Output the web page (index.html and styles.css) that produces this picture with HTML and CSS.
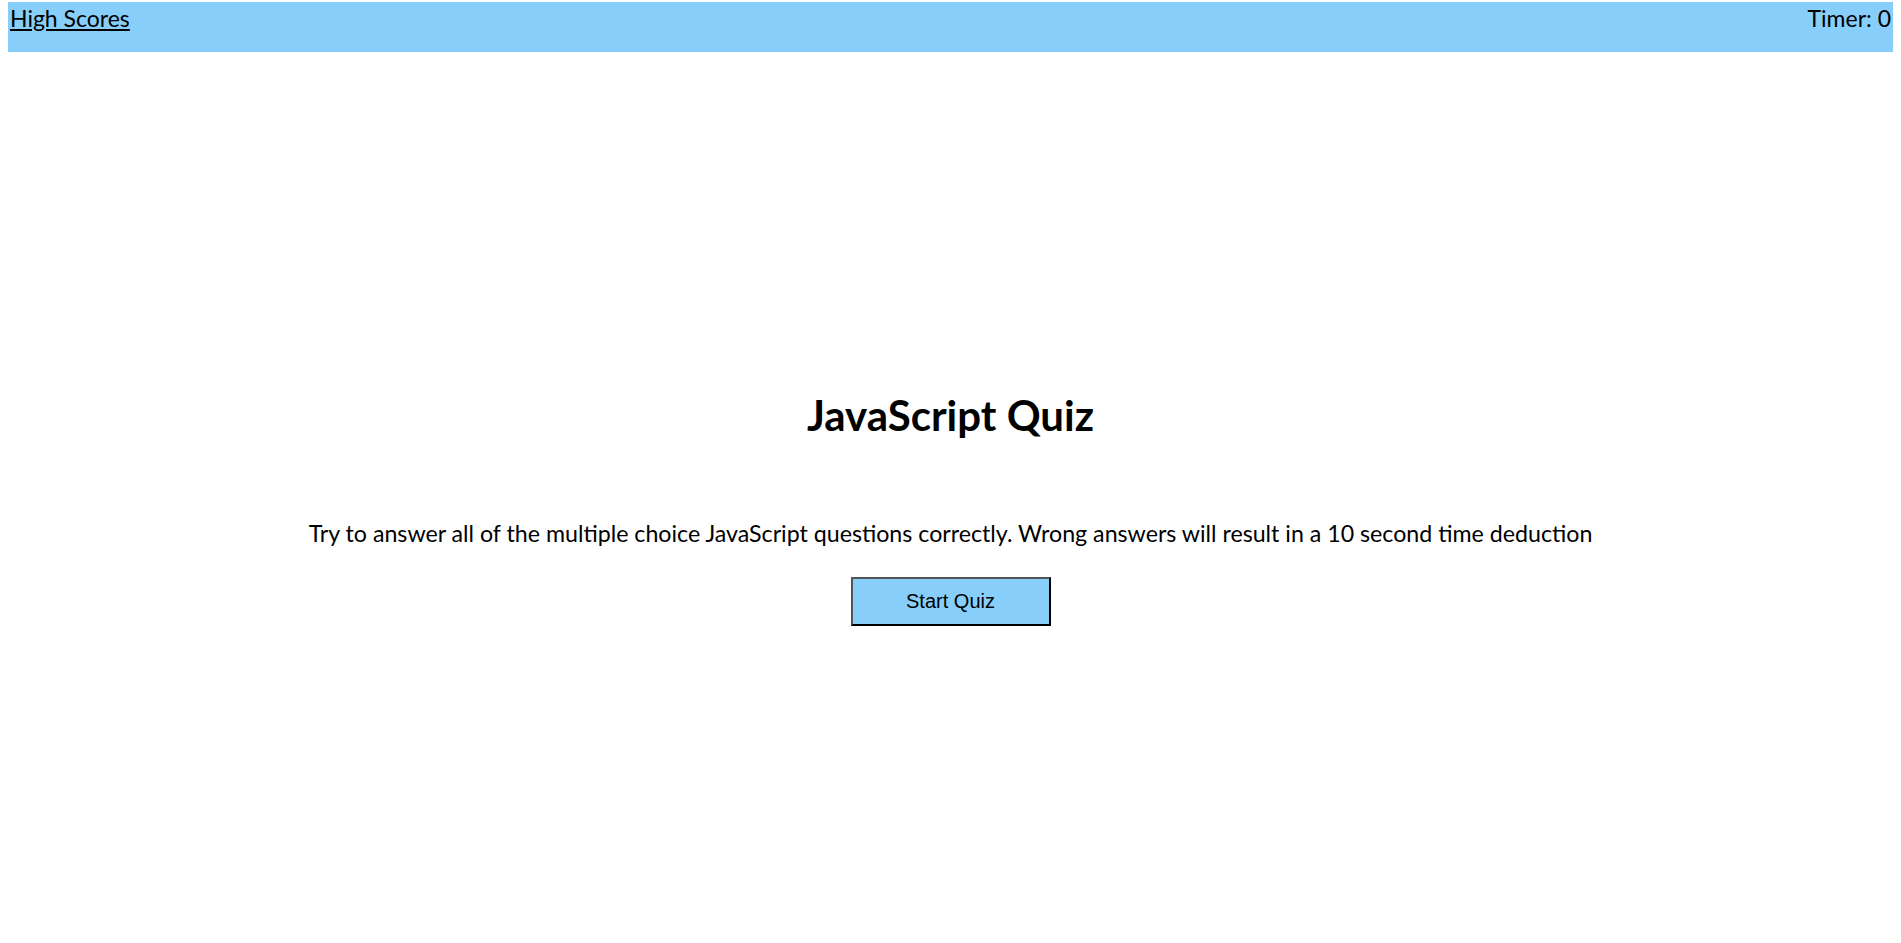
FILE: index.html
```html
<!DOCTYPE html>
<html lang="en">
<head>
<meta charset="utf-8">
<title>JavaScript Quiz</title>
<link rel="stylesheet" href="styles.css">
</head>
<body>
<header class="topbar">
  <a class="scores-link" href="#">High Scores</a>
  <div class="timer">Timer: 0</div>
</header>
<main class="intro">
  <h1 class="title">JavaScript Quiz</h1>
  <p class="desc">Try to answer all of the multiple choice JavaScript questions correctly. Wrong answers will result in a 10 second time deduction</p>
  <button class="start-btn" type="button">Start Quiz</button>
</main>
</body>
</html>
```
FILE: styles.css
```css
html, body {
  margin: 0;
  padding: 0;
  background: #ffffff;
}
body {
  padding: 2px 8px 0 8px;
  font-family: "Lato", "Open Sans", sans-serif;
  color: #000;
}
.topbar {
  display: flex;
  justify-content: space-between;
  align-items: flex-start;
  height: 50px;
  background: #87cefa;
  font-size: 23px;
  line-height: 32px;
  padding: 0 2px;
}
.scores-link {
  color: #000;
  text-decoration: underline;
}
.timer {
  color: #000;
}
.intro {
  display: flex;
  flex-direction: column;
  align-items: center;
  padding-top: 339px;
}
.title {
  margin: 0;
  font-size: 42px;
  line-height: 48px;
  font-weight: 700;
}
.desc {
  margin: 80px 0 0 0;
  font-size: 23.2px;
  line-height: 28px;
}
.start-btn {
  margin-top: 30px;
  width: 200px;
  height: 49px;
  background: #87cefa;
  border: 2px solid;
  border-color: #555 #000 #000 #555;
  font-family: "Liberation Sans", Arial, sans-serif;
  font-size: 20px;
  color: #000;
  padding: 0;
}
```
